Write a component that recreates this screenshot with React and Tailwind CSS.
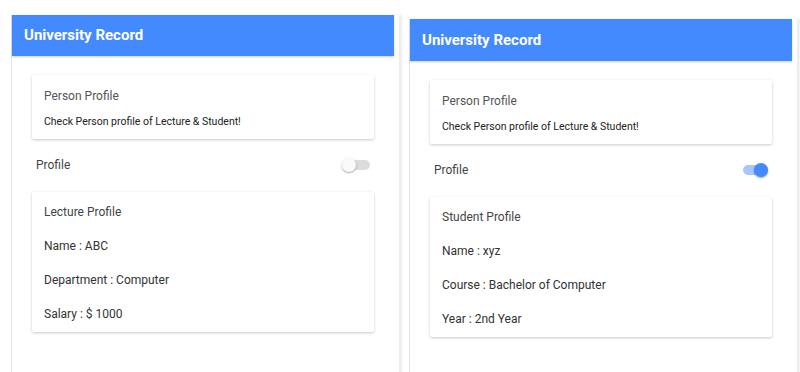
import React from "react";

function Toggle({ on }) {
  return (
    <div className="relative w-[28px] h-[14px] flex items-center">
      <div
        className={
          "absolute left-[3px] right-0 h-[10px] rounded-full " +
          (on ? "bg-[#a9c6fb]" : "bg-[#dcdcdc]")
        }
      />
      <div
        className={
          "absolute top-0 w-[14px] h-[14px] rounded-full shadow-[0_1px_2px_rgba(0,0,0,0.35)] " +
          (on ? "right-0 bg-[#448aff]" : "left-0 bg-[#fafafa]")
        }
      />
    </div>
  );
}

function Panel({ on, title, items, offset }) {
  return (
    <div
      className={
        "w-[388px] h-[400px] shrink-0 bg-white border-l border-[#e4e4e4] shadow-[3px_0_2px_rgba(0,0,0,0.07)] " +
        (offset ? "mt-[4px]" : "")
      }
    >
      <div
        className={
          "w-[382px] bg-[#448aff] flex items-center pl-[12px] shadow-[0_1px_2px_rgba(0,0,0,0.2)] " +
          (offset ? "h-[42px]" : "h-[41px]")
        }
      >
        <span className="text-white font-bold text-[15px] leading-none">University Record</span>
      </div>
      <div className="w-[382px] px-[20px] pt-[19px]">
        <div className="bg-white rounded-[2px] shadow-[0_1px_3px_rgba(0,0,0,0.22)] px-[12px] pt-[14px] pb-[11px]">
          <div className="text-[12px] leading-[14px] text-[#555]">Person Profile</div>
          <div className="text-[10.5px] leading-[13px] text-[#222] mt-[12px]">
            Check Person profile of Lecture &amp; Student!
          </div>
        </div>
        <div className="h-[53px] flex items-center justify-between px-[4px] pb-[2px]">
          <span className="text-[12px] text-[#444]">Profile</span>
          <Toggle on={on} />
        </div>
        <div className="bg-white rounded-[2px] shadow-[0_1px_3px_rgba(0,0,0,0.22)] px-[12px] pt-[3px] pb-[1px]">
          <div className="h-[34px] flex items-center text-[12px] text-[#444]">{title}</div>
          {items.map((t) => (
            <div key={t} className="h-[34px] flex items-center text-[12px] text-[#333]">
              {t}
            </div>
          ))}
        </div>
      </div>
    </div>
  );
}

export default function App() {
  return (
    <div
      className="w-[800px] h-[372px] overflow-hidden bg-white flex items-start gap-[10px] pl-[11px] pt-[15px]"
      style={{ fontFamily: "Roboto, 'Noto Sans', sans-serif" }}
    >
      <Panel
        on={false}
        title="Lecture Profile"
        items={["Name : ABC", "Department : Computer", "Salary : $ 1000"]}
      />
      <Panel
        on={true}
        offset
        title="Student Profile"
        items={["Name : xyz", "Course : Bachelor of Computer", "Year : 2nd Year"]}
      />
    </div>
  );
}
